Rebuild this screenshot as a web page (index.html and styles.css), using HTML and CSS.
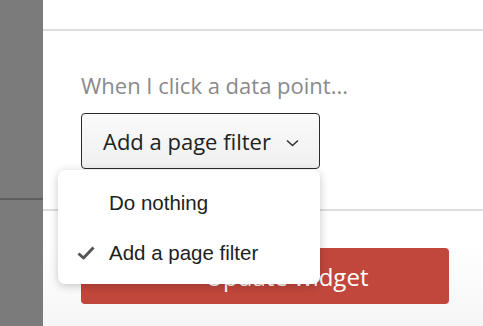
FILE: index.html
```html
<!DOCTYPE html>
<html lang="en">
<head>
  <meta charset="UTF-8" />
  <title>Widget settings</title>
  <link rel="stylesheet" href="styles.css">
</head>
<body>
  <div class="sidebar">
    <div class="sidebar-top"></div>
  </div>

  <div class="panel">
    <div class="panel-head"></div>

    <div class="panel-body">
      <label class="field-label">When I click a data point...</label>

      <div class="select-wrap">
        <button class="select-btn">
          Add a page filter
          <svg class="chevron" width="13" height="8" viewBox="0 0 13 8">
            <path d="M1 1.5 L6.5 6.5 L12 1.5" fill="none" stroke="#333" stroke-width="1.6" />
          </svg>
        </button>

        <ul class="menu">
          <li class="menu-item">Do nothing</li>
          <li class="menu-item selected">
            <svg class="check" width="18" height="14" viewBox="0 0 18 14">
              <path d="M1.5 7.5 L6.5 12 L16.5 1.5" fill="none" stroke="#555" stroke-width="3" stroke-linejoin="round" />
            </svg>
            Add a page filter
          </li>
        </ul>
      </div>
    </div>

    <div class="panel-foot">
      <button class="save-btn">
        <svg width="18" height="18" viewBox="0 0 18 18">
          <path d="M9 2 V16 M2 9 H16" stroke="#fff" stroke-width="2.5" />
        </svg>
        Update widget
      </button>
    </div>
  </div>
</body>
</html>
```

FILE: styles.css
```css
body {
  margin: 0;
  width: 483px;
  height: 326px;
  overflow: hidden;
  display: flex;
  font-family: 'Open Sans', sans-serif;
  background: #fff;
}
.sidebar {
  width: 43px;
  flex-shrink: 0;
  background: #7b7b7b;
}
.sidebar-top {
  height: 198px;
  border-bottom: 2px solid #5e5e5e;
}
.panel {
  flex: 1;
  display: flex;
  flex-direction: column;
  background: linear-gradient(180deg, #fff 75%, #f6f6f6 100%);
}
.panel-head {
  height: 29px;
  border-bottom: 2px solid #dedede;
}
.panel-body {
  padding: 40px 0 0 38px;
  height: 138px;
  border-bottom: 2px solid #dedede;
}
.field-label {
  display: block;
  font-size: 22px;
  line-height: 28px;
  color: #8a8a8a;
  margin-bottom: 14px;
}
.select-wrap {
  position: relative;
  width: 239px;
}
.select-btn {
  width: 239px;
  height: 56px;
  display: flex;
  align-items: center;
  gap: 15px;
  padding: 0 0 0 21px;
  border: 1.5px solid #2b2b2b;
  border-radius: 4px;
  background: linear-gradient(180deg, #fafafa, #f0f0f0);
  font-family: 'Open Sans', sans-serif;
  font-size: 22px;
  color: #222;
}
.chevron {
  margin-top: 4px;
}
.menu {
  position: absolute;
  top: 57px;
  left: -23px;
  width: 262px;
  margin: 0;
  padding: 8px 0 6px;
  list-style: none;
  background: #fff;
  border-radius: 7px;
  box-shadow: 0 2px 10px rgba(0, 0, 0, 0.22);
  font-family: 'Liberation Sans', Arial, sans-serif;
  font-size: 20.5px;
  color: #1e1e1e;
}
.menu-item {
  position: relative;
  height: 50px;
  line-height: 50px;
  padding-left: 51px;
}
.check {
  position: absolute;
  left: 19px;
  top: 18px;
}
.panel-foot {
  padding: 37px 0 0 38px;
}
.save-btn {
  width: 368px;
  height: 56px;
  display: flex;
  align-items: center;
  justify-content: center;
  gap: 12px;
  padding-left: 20px;
  border: none;
  border-radius: 4px;
  background: #c1473c;
  color: #fff;
  font-family: 'Open Sans', sans-serif;
  font-size: 24px;
}
```
